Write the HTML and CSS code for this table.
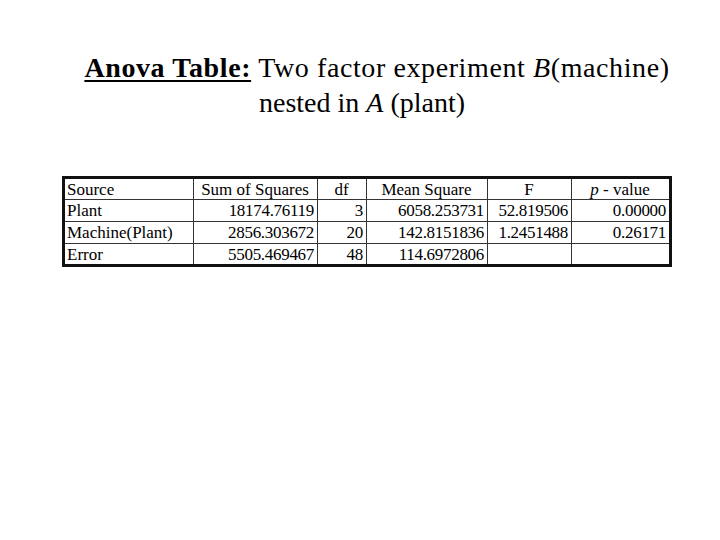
FILE: index.html
```html
<!DOCTYPE html>
<html>
<head>
<meta charset="utf-8">
<link rel="stylesheet" href="styles.css">
</head>
<body>
<div class="slide">
  <h1 class="title">
    <span class="line1"><span class="lead">Anova Table:</span> Two factor experiment <i>B</i>(machine)</span>
    <span class="line2">nested in <i>A</i> (plant)</span>
  </h1>
  <div class="table-wrap">
    <table class="anova">
      <colgroup>
        <col class="c-src"><col class="c-ss"><col class="c-df"><col class="c-ms"><col class="c-f"><col class="c-p">
      </colgroup>
      <thead>
        <tr>
          <th class="left">Source</th>
          <th>Sum of Squares</th>
          <th>df</th>
          <th>Mean Square</th>
          <th>F</th>
          <th><i>p</i> - value</th>
        </tr>
      </thead>
      <tbody>
        <tr>
          <td class="left">Plant</td>
          <td>18174.76119</td>
          <td>3</td>
          <td>6058.253731</td>
          <td>52.819506</td>
          <td>0.00000</td>
        </tr>
        <tr>
          <td class="left">Machine(Plant)</td>
          <td>2856.303672</td>
          <td>20</td>
          <td>142.8151836</td>
          <td>1.2451488</td>
          <td>0.26171</td>
        </tr>
        <tr>
          <td class="left">Error</td>
          <td>5505.469467</td>
          <td>48</td>
          <td>114.6972806</td>
          <td></td>
          <td></td>
        </tr>
      </tbody>
    </table>
  </div>
</div>
</body>
</html>
```

FILE: styles.css
```css
html, body {
  margin: 0;
  padding: 0;
  background: #ffffff;
}

.slide {
  width: 720px;
  height: 540px;
  font-family: "Liberation Serif", "Times New Roman", serif;
  color: #000000;
  overflow: hidden;
}

.title {
  margin: 0;
  padding-top: 50px;
  font-size: 28px;
  font-weight: normal;
  line-height: 35px;
  text-align: center;
}

.title .line1 {
  display: block;
  padding-left: 34px;
  letter-spacing: 0.6px;
}

.title .line2 {
  display: block;
  padding-left: 4px;
}

.title .lead {
  font-weight: bold;
  text-decoration: underline;
  text-decoration-thickness: 2px;
  text-underline-offset: 3px;
}

.table-wrap {
  margin-top: 56px;
  padding-left: 62px;
}

.anova {
  border-collapse: collapse;
  table-layout: fixed;
  width: 607px;
  border: 3px solid #111111;
  font-size: 17px;
  line-height: 19px;
}

.c-src { width: 130px; }
.c-ss { width: 124px; }
.c-df { width: 49px; }
.c-ms { width: 121px; }
.c-f { width: 84px; }
.c-p { width: 99px; }

.anova th,
.anova td {
  border: 1px solid #333333;
  height: 22px;
  padding: 0 3px 0 2px;
  box-sizing: border-box;
  white-space: nowrap;
  vertical-align: middle;
}

.anova th {
  font-weight: normal;
  text-align: center;
}

.anova td {
  text-align: right;
  letter-spacing: -0.3px;
}

.anova .left {
  text-align: left;
  letter-spacing: 0;
}
```
